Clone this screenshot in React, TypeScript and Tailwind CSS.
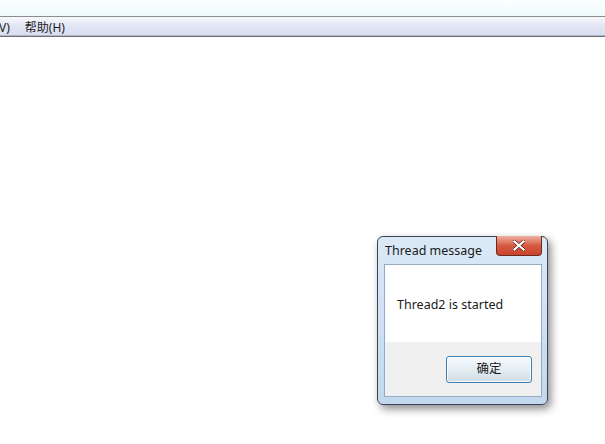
export default function App() {
  return (
    <div
      className="relative flex h-[444px] w-[605px] flex-col overflow-hidden bg-white"
      style={{ fontFamily: '"Noto Sans", "Noto Sans CJK SC", sans-serif' }}
    >
      {/* window title strip */}
      <div className="h-[16px] bg-gradient-to-b from-[#fbffff] to-[#eefbfb]" />
      <div className="h-px bg-[#8a8d90]" />

      {/* menu bar */}
      <div className="flex h-[18px] items-center gap-[15px] bg-gradient-to-b from-[#f9f9fc] via-[#e2e5f4] to-[#dadef2] pt-[3px] text-[12px] leading-none text-[#1e1e1e]">
        <span className="-ml-px">V)</span>
        <span>帮助(H)</span>
      </div>
      <div className="h-px bg-[#b4b6c0]" />
      <div className="h-px bg-[#6e7074]" />

      <div className="flex-1 bg-white" />

      {/* message box */}
      <div className="absolute left-[377px] top-[236px] flex h-[169px] w-[171px] flex-col rounded-[6px] border border-[#3b4350] bg-gradient-to-b from-[#dbe9f7] to-[#c3d8ee] shadow-[3px_4px_8px_rgba(0,0,0,0.45)]">
        <div className="relative flex h-[27px] items-center pl-[7px] pt-[2px]">
          <span className="text-[12.5px] leading-none text-[#1a1a1a]">Thread message</span>
          <div className="absolute right-[5px] top-[-1px] flex h-[20px] w-[46px] items-center justify-center rounded-b-[4px] border border-t-0 border-[#6a2a22] bg-gradient-to-b from-[#eeb0a4] via-[#d65a42] to-[#c8432c]">
            <svg width="12" height="11" viewBox="0 0 12 11">
              <path
                d="M1.5 1.5 L10.5 9.5 M10.5 1.5 L1.5 9.5"
                stroke="#5a1a14"
                strokeWidth="3.6"
                strokeLinecap="square"
              />
              <path
                d="M1.5 1.5 L10.5 9.5 M10.5 1.5 L1.5 9.5"
                stroke="#ffffff"
                strokeWidth="2.2"
                strokeLinecap="square"
              />
            </svg>
          </div>
        </div>

        <div className="mb-[7px] ml-[6px] mr-[5px] flex flex-1 flex-col border border-[#95aac3] bg-white">
          <div className="flex h-[77px] items-start pl-[12px] pt-[34px]">
            <span className="text-[12.5px] leading-none text-[#1a1a1a]">Thread2 is started</span>
          </div>
          <div className="flex flex-1 items-start justify-end bg-[#f0f0f0] pr-[9px] pt-[14px]">
            <button className="flex h-[27px] w-[86px] items-center justify-center rounded-[3px] border border-[#3c7fb1] bg-gradient-to-b from-[#f4f9fc] via-[#e6eef4] to-[#cfdce6] text-[12.5px] leading-none text-[#1a1a1a] shadow-[inset_0_0_0_1px_rgba(255,255,255,0.8)]">
              确定
            </button>
          </div>
        </div>
      </div>
    </div>
  );
}
